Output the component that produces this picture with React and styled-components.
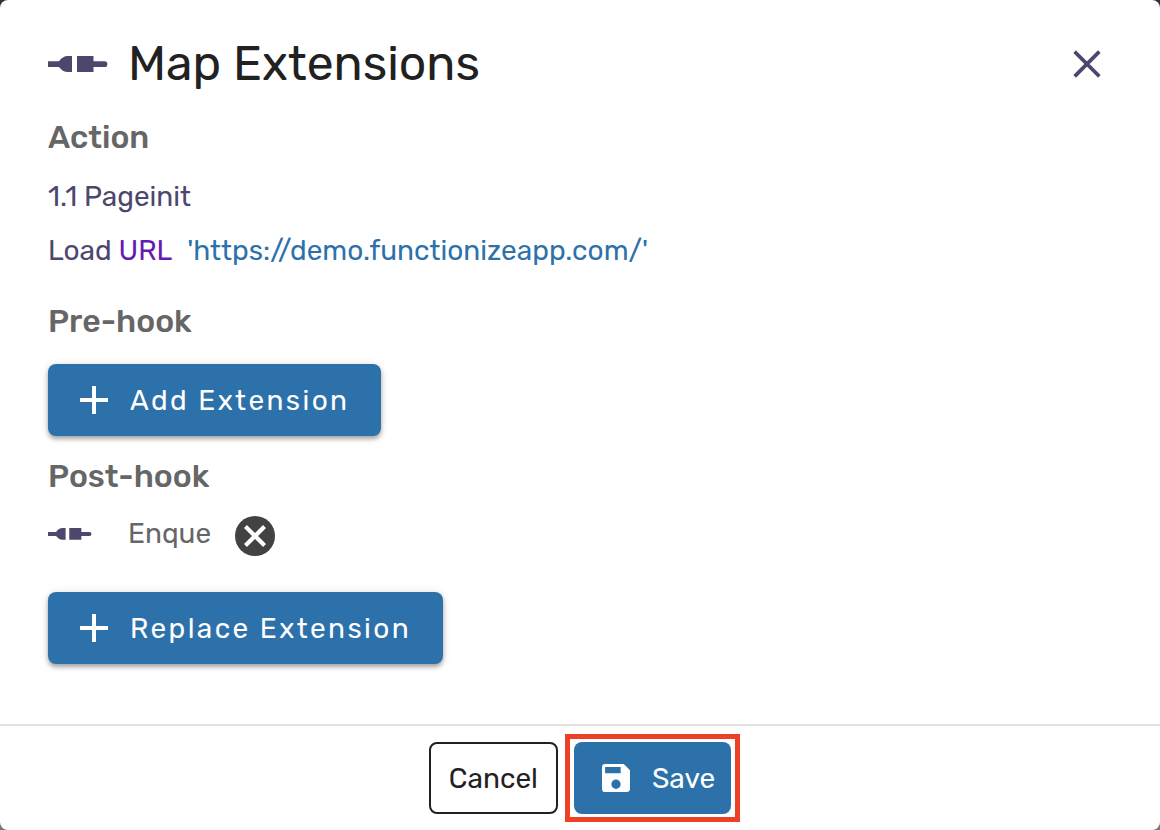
import React from 'react'
import styled, { createGlobalStyle } from 'styled-components'

const GlobalStyle = createGlobalStyle`
  * {
    box-sizing: border-box;
  }

  body {
    margin: 0;
    background: linear-gradient(#2e2d42, #77777b);
    font-family: Rubik, Inter, Roboto, sans-serif;
    -webkit-font-smoothing: antialiased;
  }
`;

const Dialog = styled.div`
  min-height: 100vh;
  display: flex;
  flex-direction: column;
  background: #fff;
  border-radius: 8px;
`;

const Header = styled.header`
  display: flex;
  align-items: center;
  gap: 20px;
  padding: 32px 58px 0 48px;
`;

const Title = styled.h1`
  flex: 1;
  margin: 0;
  font-size: 48px;
  line-height: 64px;
  font-weight: 400;
  color: #212121;
`;

const CloseButton = styled.button`
  display: flex;
  padding: 0;
  border: 0;
  background: none;
  color: #4b476d;
  cursor: pointer;
`;

const Content = styled.main`
  flex: 1;
  padding: 21px 48px 40px;
`;

const Section = styled.section`
  margin-bottom: ${({ $gap }) => $gap || 20}px;
`;

const SectionTitle = styled.h2`
  margin: 0 0 ${({ $gap }) => $gap || 20}px;
  font-size: 32px;
  line-height: 40px;
  font-weight: 500;
  color: #666;
`;

const Line = styled.p`
  margin: 0 0 14px;
  font-size: 28px;
  line-height: 40px;
  color: #4b476d;
`;

const Keyword = styled.span`
  margin-right: 8px;
  color: #651bb0;
`;

const Value = styled.span`
  color: #2d71ab;
`;

const Extension = styled.div`
  display: flex;
  align-items: flex-start;
  gap: 24px;
  margin-bottom: 36px;
`;

const ExtensionName = styled.span`
  display: flex;
  align-items: center;
  gap: 36px;
  font-size: 28px;
  line-height: 36px;
  color: #666;
`;

const RemoveButton = styled.button`
  display: flex;
  align-items: center;
  justify-content: center;
  width: 40px;
  height: 40px;
  padding: 0;
  border: 0;
  border-radius: 50%;
  background: #424242;
  color: #fff;
  cursor: pointer;
`;

const Button = styled.button`
  display: inline-flex;
  align-items: center;
  height: 72px;
  border: 0;
  border-radius: 8px;
  background: #2d71ab;
  color: #fff;
  font-family: inherit;
  font-size: 28px;
  cursor: pointer;
`;

const RaisedButton = styled(Button)`
  gap: 22px;
  padding: 0 32px;
  letter-spacing: 0.085em;
  box-shadow: 0 3px 4px rgba(0, 0, 0, 0.3), 0 1px 10px rgba(0, 0, 0, 0.12);
`;

const Footer = styled.footer`
  display: flex;
  justify-content: center;
  gap: 16px;
  padding: 16px;
  border-top: 2px solid #e0e0e0;
`;

const CancelButton = styled(Button)`
  padding: 0 18px;
  border: 2px solid #212121;
  background: #fff;
  color: #212121;
`;

const Highlight = styled.div`
  display: flex;
  margin: -8px -9px;
  padding: 3px 4px;
  border: 5px solid #ee4027;
`;

const SaveButton = styled(Button)`
  gap: 22px;
  padding: 0 16px 0 28px;
`;

const PlugIcon = ({ width }) => (
  <svg width={width} height={(width * 16) / 60} viewBox="0 0 60 16" fill="#4b476d" aria-hidden="true">
    <path d="M0 5.300h11C13.500 2 16 0 20 0h4v16h-4c-4 0-6.500-2-9-5H0z" />
    <path d="M29 0h16.500v5.300h11a2.850 2.850 0 0 1 0 5.700h-11V16H29z" />
  </svg>
)

const CrossIcon = ({ size, strokeWidth }) => (
  <svg
    width={size}
    height={size}
    viewBox="0 0 30 30"
    stroke="currentColor"
    strokeWidth={strokeWidth}
    strokeLinecap="square"
    aria-hidden="true"
  >
    <path d="M4 4l22 22M26 4L4 26" />
  </svg>
)

const PlusIcon = () => (
  <svg width="28" height="28" viewBox="0 0 28 28" fill="currentColor" aria-hidden="true">
    <path d="M12 0h4v12h12v4H16v12h-4V16H0v-4h12z" />
  </svg>
)

const SaveIcon = () => (
  <svg width="28" height="28" viewBox="3 3 18 18" fill="currentColor" aria-hidden="true">
    <path d="M17 3H5a2 2 0 0 0-2 2v14a2 2 0 0 0 2 2h14c1.100 0 2-.9 2-2V7l-4-4zm-5 16a3 3 0 1 1 0-6 3 3 0 0 1 0 6zm3-10H5V5h10v4z" />
  </svg>
)

const App = () => {
  return (
    <>
      <GlobalStyle />
      <Dialog role="dialog" aria-labelledby="dialog-title">
        <Header>
          <PlugIcon width={60} />
          <Title id="dialog-title">Map Extensions</Title>
          <CloseButton aria-label="Close">
            <CrossIcon size={30} strokeWidth={3.8} />
          </CloseButton>
        </Header>
        <Content>
          <Section $gap={30}>
            <SectionTitle>Action</SectionTitle>
            <Line>1.1 Pageinit</Line>
            <Line>
              Load <Keyword>URL</Keyword> <Value>'https://demo.functionizeapp.com/'</Value>
            </Line>
          </Section>
          <Section>
            <SectionTitle $gap={23}>Pre-hook</SectionTitle>
            <RaisedButton>
              <PlusIcon />
              Add Extension
            </RaisedButton>
          </Section>
          <Section>
            <SectionTitle>Post-hook</SectionTitle>
            <Extension>
              <ExtensionName>
                <PlugIcon width={44} />
                Enque
              </ExtensionName>
              <RemoveButton aria-label="Remove Enque">
                <CrossIcon size={22} strokeWidth={5.6} />
              </RemoveButton>
            </Extension>
            <RaisedButton>
              <PlusIcon />
              Replace Extension
            </RaisedButton>
          </Section>
        </Content>
        <Footer>
          <CancelButton>Cancel</CancelButton>
          <Highlight>
            <SaveButton>
              <SaveIcon />
              Save
            </SaveButton>
          </Highlight>
        </Footer>
      </Dialog>
    </>
  )
}

export default App
